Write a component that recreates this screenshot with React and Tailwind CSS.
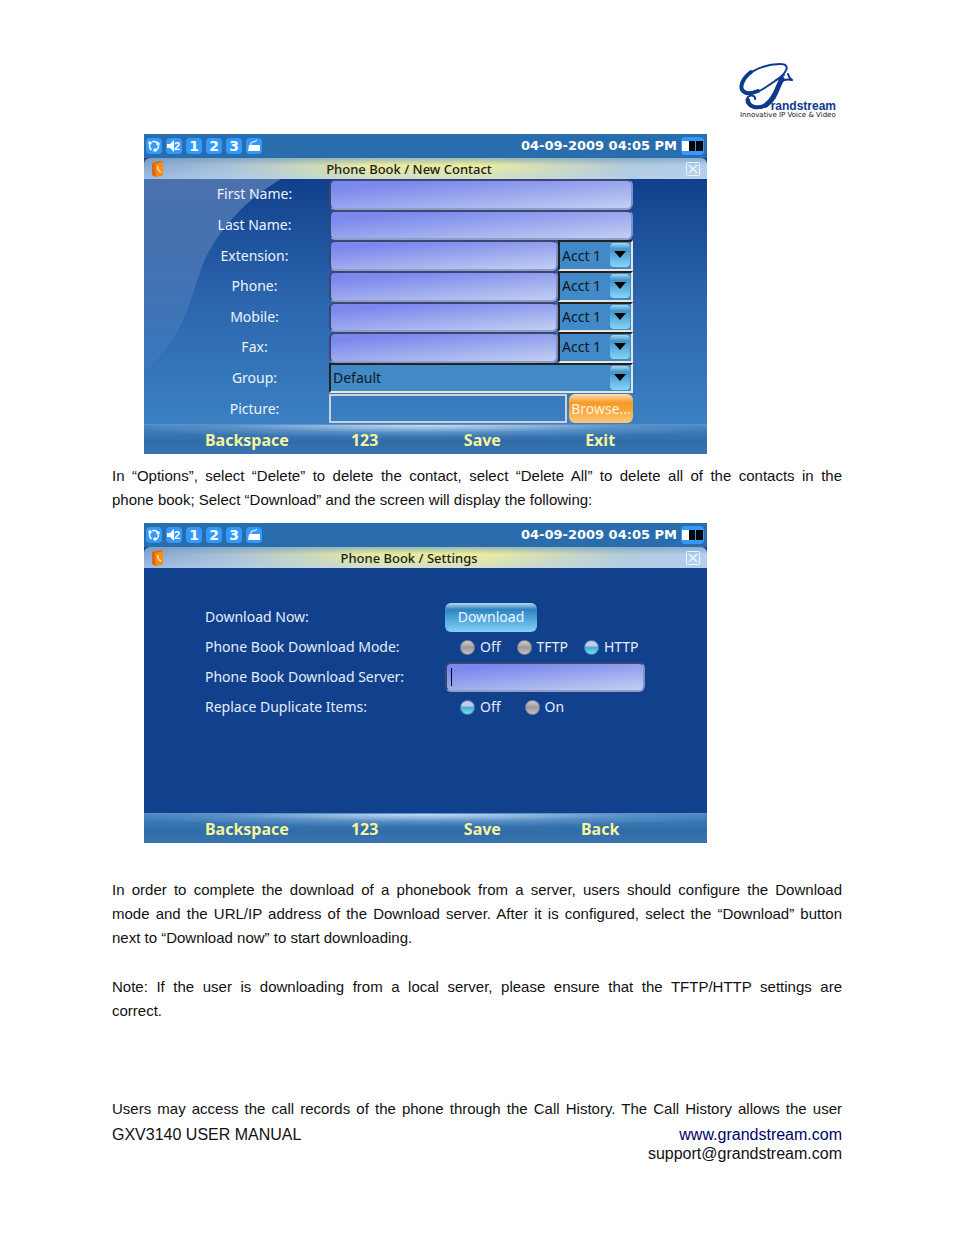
const contactRows = [
  { id: 'first-name', label: 'First Name:', type: 'text' },
  { id: 'last-name', label: 'Last Name:', type: 'text' },
  { id: 'extension', label: 'Extension:', type: 'account' },
  { id: 'phone', label: 'Phone:', type: 'account' },
  { id: 'mobile', label: 'Mobile:', type: 'account' },
  { id: 'fax', label: 'Fax:', type: 'account' },
  { id: 'group', label: 'Group:', type: 'group' },
  { id: 'picture', label: 'Picture:', type: 'file' },
]

function Logo() {
  return (
    <svg className="w-[104px] h-[62px]" viewBox="0 0 104 62" role="img" aria-label="Grandstream">
      <g fill="none" stroke="#0d3a8c" strokeLinecap="round" strokeLinejoin="round">
        <path d="M38 20 C48 14 54 4 42 4 C24 4 3 15 3 26 C3 36 15 35 25 29 C33 24 41 18 46 15" strokeWidth="2" />
        <path d="M13 12 C5 18 1 27 5 31 C9 35 15 33 20 31" strokeWidth="4" />
        <path d="M50 14 C51 17 52 19 54 20 C46 18 42 21 40 27 C37 38 31 48 20 48 C11 48 6 42 10 37 C13 34 18 36 17 39" strokeWidth="2" />
        <path d="M44 19 C39 27 38 38 28 45" strokeWidth="5" />
        <path d="M10 40 C11 48 20 49 28 45" strokeWidth="4" />
      </g>
      <text x="98" y="50" textAnchor="end" fill="#0d3a8c" fontSize="12" fontWeight="700" fontFamily="'Liberation Sans', sans-serif">randstream</text>
      <text x="2" y="57" fill="#111111" fontSize="7" fontFamily="'DejaVu Sans', sans-serif">Innovative IP Voice &amp; Video</text>
    </svg>
  )
}

function StatusIcon({ children }) {
  return (
    <span className="size-4 rounded-sm bg-[#3399ff] flex items-center justify-center text-white">
      {children}
    </span>
  )
}

function StatusBar() {
  return (
    <div className="h-6 flex items-center justify-between bg-[#296dad] pl-0.5 font-['DejaVu_Sans',sans-serif]">
      <div className="flex gap-1">
        <StatusIcon>
          <svg className="size-4" viewBox="0 0 16 16" fill="none" stroke="currentColor" strokeWidth="1.500">
            <circle cx="8" cy="8" r="4.500" strokeDasharray="7 2.400" />
            <circle cx="4" cy="5" r="1" fill="currentColor" />
            <circle cx="12" cy="6" r="1" fill="currentColor" />
            <circle cx="9" cy="12" r="1" fill="currentColor" />
          </svg>
        </StatusIcon>
        <StatusIcon>
          <svg className="size-4" viewBox="0 0 16 16" fill="currentColor">
            <path d="M1 6h3l4-4v12l-4-4H1z" />
            <text x="8" y="12" fontSize="11" fontWeight="700" fontFamily="'Liberation Sans', sans-serif">2</text>
          </svg>
        </StatusIcon>
        {['1', '2', '3'].map((n) => (
          <StatusIcon key={n}>
            <span className="text-sm leading-4 font-bold">{n}</span>
          </StatusIcon>
        ))}
        <StatusIcon>
          <svg className="size-4" viewBox="0 0 16 16">
            <path d="M3 7h11v6H2z" fill="currentColor" />
            <path d="M5 7V5q0-1 2-1t4-2" fill="none" stroke="currentColor" />
          </svg>
        </StatusIcon>
      </div>
      <div className="flex items-center gap-1 pr-[3px]">
        <span className="text-[13px] font-bold text-white">04-09-2009 04:05 PM</span>
        <svg className="w-[23px] h-[18px]" viewBox="0 0 23 18">
          <rect width="23" height="18" rx="4" fill="#3399ff" />
          <rect x="1" y="4" width="7" height="10" fill="#fff" />
          <rect x="8" y="4" width="6" height="10" fill="#000" />
          <rect x="15" y="4" width="7" height="10" fill="#000" />
        </svg>
      </div>
    </div>
  )
}

function TitleBar({ title }) {
  return (
    <div className="bg-[#223f8e]">
      <div className="h-[21px] flex items-center justify-between pl-2 pr-[7px] rounded-t-md bg-[linear-gradient(180deg,rgba(100,150,190,0.6),rgba(255,255,255,0)_35%,rgba(180,210,245,0.5)),linear-gradient(90deg,#88a8d4,#a9c1d6_15%,#eaeb9f_40%,#eeed9b_60%,#b4cbd9_85%,#b3cdee)]">
        <svg className="w-3 h-4" viewBox="0 0 12 16">
          <path d="M0 2l8-2 3 1v13l-7 2-4-2z" fill="#d9690a" />
          <path d="M3 3l8-2v13l-7 2z" fill="#ff8a12" />
          <path d="M6 5q-1 4 3 6" fill="none" stroke="#ffe0b0" strokeWidth="1.500" />
        </svg>
        <h2 className="pr-8 text-[13px] leading-5 text-[#222211] font-medium">{title}</h2>
        <button type="button" aria-label="Close" className="size-[14px] text-white/80">
          <svg className="size-[14px]" viewBox="0 0 14 14" fill="none" stroke="currentColor">
            <rect x="0.5" y="0.5" width="13" height="13" rx="1" />
            <path d="M3 3l8 8M11 3l-8 8" strokeWidth="1.500" />
          </svg>
        </button>
      </div>
    </div>
  )
}

function SoftKeys({ keys }) {
  return (
    <div className="h-[30px] grid grid-cols-4 pl-11 pr-12 border-t border-[#5a92cc] bg-[radial-gradient(ellipse_60%_45%_at_50%_0%,rgba(225,238,255,0.85),rgba(140,180,220,0.35)_60%,transparent),linear-gradient(180deg,#4080bd,#2f6ca8_60%,#3a75b2)]">
      {keys.map((key) => (
        <button key={key} type="button" className="text-base leading-7 font-bold text-[#f8f39c]">
          {key}
        </button>
      ))}
    </div>
  )
}

function TextField({ id }) {
  return (
    <input
      id={id}
      type="text"
      className="block w-full h-full min-w-0 rounded-md border-2 border-[#3b4673] border-r-[#7c8fd0] border-b-[#8f9cc8] px-2 text-sm text-black outline-none bg-[linear-gradient(175deg,#7b88ee_15%,#97a5ee_50%,#c3cff2)]"
    />
  )
}

function Select({ id, label, value }) {
  return (
    <div className="relative h-full w-full">
      <select
        id={id}
        aria-label={label}
        defaultValue={value}
        className="appearance-none block w-full h-full border-2 border-t-[#222222] border-l-[#222222] border-r-[#e8e6df] border-b-[#e8e6df] bg-[#4189c7] pl-0.5 text-sm text-[#101820] outline-none"
      >
        <option>{value}</option>
      </select>
      <svg className="pointer-events-none absolute right-[3px] top-[3px] w-5 h-6" viewBox="0 0 20 24">
        <defs>
          <linearGradient id="arrow-face" x1="0" y1="0" x2="0" y2="1">
            <stop offset="0" stopColor="#a8d8ee" />
            <stop offset="0.25" stopColor="#3f93cd" />
            <stop offset="1" stopColor="#86d6f6" />
          </linearGradient>
        </defs>
        <rect width="20" height="24" rx="4" fill="url(#arrow-face)" />
        <path d="M4 8h12l-6 7z" fill="#000" />
      </svg>
    </div>
  )
}

function ContactControl({ row }) {
  if (row.type === 'account') {
    return (
      <div className="flex h-full">
        <div className="flex-1 min-w-0"><TextField id={row.id} /></div>
        <div className="w-[75px]"><Select label={`${row.label} account`} value="Acct 1" /></div>
      </div>
    )
  }
  if (row.type === 'group') return <Select id={row.id} value="Default" />
  if (row.type === 'file') {
    return (
      <div className="flex h-full gap-0.5 py-px">
        <input id={row.id} type="text" className="flex-1 min-w-0 border-2 border-[#cfd2d2] bg-transparent px-1 text-sm outline-none" />
        <button type="button" className="w-16 rounded-md text-sm text-[#fff3dc] whitespace-nowrap bg-[linear-gradient(180deg,#fde0b8,#f59a27_30%,#f9a53a_55%,#fdc87c)]">
          Browse...
        </button>
      </div>
    )
  }
  return <TextField id={row.id} />
}

function NewContactScreen() {
  return (
    <section className="ml-8 w-full max-w-[563px] overflow-hidden font-['Noto_Sans',sans-serif]">
      <StatusBar />
      <TitleBar title="Phone Book / New Contact" />
      <div className="relative h-[245px] bg-[linear-gradient(180deg,#10408c,#2c66ae_50%,#3a80c2)]">
        <svg className="absolute left-0 top-0 w-[140px] h-[210px]" viewBox="0 0 140 210">
          <defs>
            <linearGradient id="glow" x1="0" y1="0" x2="0" y2="1">
              <stop offset="0" stopColor="#4c71ad" />
              <stop offset="0.500" stopColor="#4a78b6" stopOpacity="0.800" />
              <stop offset="1" stopColor="#4c86c6" stopOpacity="0.200" />
            </linearGradient>
          </defs>
          <path d="M0 0H137C100 22 76 50 61 80C50 106 46 134 30 158Q16 180 0 192Z" fill="url(#glow)" />
        </svg>
        <form className="relative grid grid-rows-8 h-full pl-9">
          {contactRows.map((row) => (
            <div key={row.id} className="flex min-h-0">
              <label htmlFor={row.id} className="w-[149px] self-center text-center text-sm text-[#eef3fb]">
                {row.label}
              </label>
              <div className="w-[304px]"><ContactControl row={row} /></div>
            </div>
          ))}
        </form>
      </div>
      <SoftKeys keys={['Backspace', '123', 'Save', 'Exit']} />
    </section>
  )
}

function Radio({ name, label, checked = false }) {
  return (
    <label className="flex items-center gap-[5px]">
      <input
        type="radio"
        name={name}
        defaultChecked={checked}
        className="appearance-none size-[15px] rounded-full border border-[#7e8797] bg-[linear-gradient(180deg,#d0cdd0,#9c9a9c_50%,#c4c1c4)] checked:border-[#3f87b8] checked:bg-[linear-gradient(180deg,#c9cbe8_35%,#45b0d4_50%,#7bdcee)]"
      />
      {label}
    </label>
  )
}

function SettingsScreen() {
  return (
    <section className="ml-8 w-full max-w-[563px] overflow-hidden font-['Noto_Sans',sans-serif]">
      <StatusBar />
      <TitleBar title="Phone Book / Settings" />
      <form className="h-[245px] bg-[#11408c] pt-[34px] pl-[61px] text-sm text-[#e6edfa]">
        <div className="flex h-[30px] items-center">
          <span className="w-60">Download Now:</span>
          <button type="button" className="w-[92px] h-[29px] rounded-md text-[#e9f6ff] bg-[linear-gradient(180deg,#b5dcf0,#2e84c4_22%,#4aa0d6_50%,#82d2f2)]">
            Download
          </button>
        </div>
        <div className="flex h-[30px] items-center">
          <span className="w-60">Phone Book Download Mode:</span>
          <div className="flex gap-4 pl-[15px]">
            <Radio name="mode" label="Off" />
            <Radio name="mode" label="TFTP" />
            <Radio name="mode" label="HTTP" checked />
          </div>
        </div>
        <div className="flex h-[30px] items-center">
          <label htmlFor="server" className="w-60">Phone Book Download Server:</label>
          <div className="relative w-[200px] h-[30px]">
            <TextField id="server" />
            <span className="absolute left-[6px] top-1.5 w-px h-[18px] bg-black" />
          </div>
        </div>
        <div className="flex h-[30px] items-center">
          <span className="w-60">Replace Duplicate Items:</span>
          <div className="flex gap-6 pl-[15px]">
            <Radio name="replace" label="Off" checked />
            <Radio name="replace" label="On" />
          </div>
        </div>
      </form>
      <SoftKeys keys={['Backspace', '123', 'Save', 'Back']} />
    </section>
  )
}

export default function App() {
  return (
    <div className="min-h-screen bg-white px-28 pt-[60px] pb-[72px] font-['Liberation_Sans',sans-serif] text-[15px] leading-6 text-[#111111]">
      <header className="flex justify-end h-[74px]">
        <Logo />
      </header>

      <main>
        <NewContactScreen />
        <p className="mt-2.5 text-justify">
          In “Options”, select “Delete” to delete the contact, select “Delete All” to delete all of the contacts in the
          {' '}phone&nbsp;book; Select “Download” and the screen will display the following:
        </p>
        <div className="mt-[11px]">
          <SettingsScreen />
        </div>
        <p className="mt-[35px] text-justify">
          In order to complete the download of a phonebook from a server, users should configure the Download
          {' '}mode&nbsp;and the URL/IP address of the Download server. After it is configured, select the “Download” button
          {' '}next&nbsp;to&nbsp;“Download now” to start downloading.
        </p>
        <p className="mt-[25px]">
          <span className="block text-justify [text-align-last:justify]">
            Note: If the user is downloading from a local server, please ensure that the TFTP/HTTP settings are
          </span>
          correct.
        </p>
        <p className="mt-[74px] text-justify [text-align-last:justify]">
          Users may access the call records of the phone through the Call History. The Call History allows the user
        </p>
      </main>

      <footer className="mt-1 flex justify-between text-base leading-[19px]">
        <span>GXV3140 USER MANUAL</span>
        <div className="flex flex-col items-end">
          <a href="http://www.grandstream.com" className="text-[#000066]">www.grandstream.com</a>
          <a href="mailto:support@grandstream.com">support@grandstream.com</a>
        </div>
      </footer>
    </div>
  )
}
